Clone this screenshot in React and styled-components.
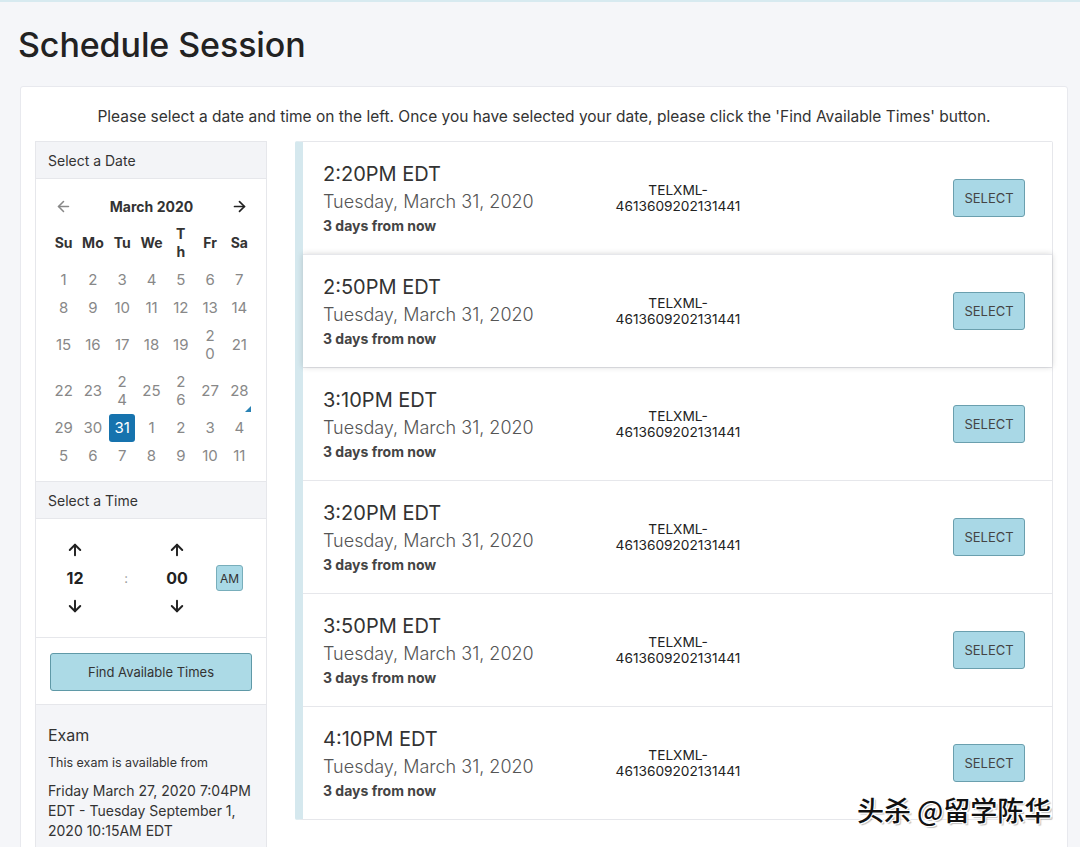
import React from "react";
import styled, { createGlobalStyle } from "styled-components";
import { ArrowLeft, ArrowRight, ArrowUp, ArrowDown } from "lucide-react";

const GlobalStyle = createGlobalStyle`
  html, body {
    margin: 0;
    padding: 0;
    background: #f5f6f9;
    font-family: Inter, "Liberation Sans", sans-serif;
    color: #333;
  }
  * { box-sizing: border-box; }
`;

const Page = styled.div`
  position: relative;
  height: 847px;
  overflow: hidden;
  border-top: 2px solid #d7eaf0;
`;

const Title = styled.h1`
  margin: 0;
  padding: 22px 0 0 18px;
  height: 84px;
  font-size: 34px;
  font-weight: 500;
  color: #222;
  letter-spacing: -0.1px;
`;

const Card = styled.div`
  margin: 0 12px 0 20px;
  background: #fff;
  border: 1px solid #e8e9ee;
  border-radius: 3px;
  padding: 0 14px;
  min-height: 800px;
`;

const Intro = styled.p`
  margin: 0;
  height: 54px;
  padding-top: 4px;
  display: flex;
  align-items: center;
  justify-content: center;
  font-size: 15.5px;
  color: #333;
`;

const Columns = styled.div`
  display: flex;
  gap: 28px;
  align-items: flex-start;
`;

const Side = styled.div`
  width: 232px;
  flex-shrink: 0;
  border: 1px solid #e6e7eb;
  border-bottom: none;
`;

const SideHeader = styled.div`
  height: 37px;
  display: flex;
  align-items: center;
  padding-left: 12px;
  background: #f3f4f7;
  border-bottom: 1px solid #e6e7eb;
  font-size: 14px;
  color: #333;
`;

const Calendar = styled.div`
  padding: 13px 12px 11px 13px;
  border-bottom: 1px solid #e6e7eb;
`;

const CalGrid = styled.div`
  display: grid;
  grid-template-columns: repeat(7, 1fr);
  text-align: center;
`;

const MonthRow = styled.div`
  grid-column: 1 / -1;
  display: grid;
  grid-template-columns: 1fr 5fr 1fr;
  align-items: center;
  height: 28px;
  font-size: 14px;
  font-weight: 700;
  color: #333;
`;

const NavArrow = styled.span`
  display: flex;
  justify-content: center;
  color: ${(p) => (p.$muted ? "#888" : "#222")};
`;

const DayHead = styled.div`
  display: flex;
  align-items: center;
  justify-content: center;
  min-height: ${(p) => (p.$tall ? "46px" : "28px")};
  font-size: 14px;
  font-weight: 700;
  line-height: 18px;
  color: #333;
`;

const DayCell = styled.div`
  display: flex;
  align-items: center;
  justify-content: center;
  position: relative;
  min-height: ${(p) => (p.$tall ? "46px" : "28px")};
  font-size: 15px;
  line-height: 18px;
  color: #888;
`;

const Selected = styled.span`
  display: flex;
  align-items: center;
  justify-content: center;
  width: 26px;
  height: 28px;
  border-radius: 3px;
  background: #1673ae;
  color: #fff;
`;

const TodayMark = styled.span`
  position: absolute;
  right: 3px;
  bottom: 2px;
  width: 0;
  height: 0;
  border-left: 6px solid transparent;
  border-bottom: 6px solid #2a82b4;
`;

const TimeBody = styled.div`
  display: flex;
  align-items: center;
  padding: 22px 0 22px 14px;
  border-bottom: 1px solid #e6e7eb;
`;

const Spinner = styled.div`
  width: 50px;
  display: flex;
  flex-direction: column;
  align-items: center;
  gap: 11px;
  color: #222;
`;

const SpinValue = styled.span`
  font-size: 16px;
  font-weight: 700;
  color: #222;
  line-height: 16px;
`;

const Colon = styled.span`
  width: 52px;
  text-align: center;
  font-size: 13px;
  color: #999;
`;

const AmButton = styled.button`
  margin-left: 14px;
  width: 27px;
  height: 26px;
  padding: 0;
  border: 1px solid #78aebb;
  border-radius: 3px;
  background: #a9d9e6;
  font-family: inherit;
  font-size: 12px;
  color: #333;
`;

const FindWrap = styled.div`
  padding: 15px 14px 13px;
  border-bottom: 1px solid #e6e7eb;
`;

const FindButton = styled.button`
  width: 100%;
  height: 38px;
  border: 1px solid #5f99a7;
  border-radius: 3px;
  background: #acdae6;
  font-family: inherit;
  font-size: 13px;
  color: #333;
`;

const Exam = styled.div`
  background: #f4f5f8;
  padding: 20px 12px 40px;
`;

const ExamTitle = styled.div`
  font-size: 16px;
  color: #333;
  line-height: 20px;
`;

const ExamNote = styled.div`
  margin-top: 10px;
  font-size: 12.5px;
  color: #333;
  line-height: 16px;
`;

const ExamRange = styled.div`
  margin-top: 10px;
  font-size: 14px;
  color: #333;
  line-height: 20px;
`;

const List = styled.div`
  flex: 1;
  border: 1px solid #e6e7eb;
  border-left: 8px solid #d5e8ee;
  border-radius: 2px;
  background: #fff;
`;

const Slot = styled.div`
  height: ${(p) => (p.$first ? "112px" : "113px")};
  display: grid;
  grid-template-columns: 1fr auto 1fr;
  align-items: center;
  padding: 0 27px 0 20px;
  border-top: ${(p) => (p.$first ? "none" : "1px solid #e6e7eb")};
  background: #fff;
  position: relative;
  z-index: ${(p) => (p.$hover ? 1 : 0)};
  box-shadow: ${(p) => (p.$hover ? "0 0 6px rgba(0, 0, 0, 0.16)" : "none")};
`;

const SlotInfo = styled.div`
  display: flex;
  flex-direction: column;
`;

const SlotTime = styled.span`
  font-size: 20px;
  line-height: 26px;
  color: #333;
`;

const SlotDate = styled.span`
  font-size: 18px;
  line-height: 30px;
  font-weight: 300;
  color: #555;
`;

const SlotAway = styled.span`
  font-size: 14px;
  line-height: 18px;
  font-weight: 700;
  color: #444;
`;

const SlotCode = styled.div`
  padding-left: 8px;
  text-align: center;
  font-size: 13.7px;
  line-height: 16px;
  color: #222;
`;

const SelectButton = styled.button`
  justify-self: end;
  width: 72px;
  height: 38px;
  border: 1px solid #6a9fae;
  border-radius: 3px;
  background: #a9d8e6;
  font-family: inherit;
  font-size: 13px;
  color: #444;
`;

const Watermark = styled.div`
  position: absolute;
  left: 857px;
  top: 794px;
  font-family: "Noto Sans CJK SC", sans-serif;
  font-size: 27px;
  line-height: 1;
  font-weight: 500;
  color: #111;
  text-shadow: 1px 1px 0 #fff, -1px -1px 0 #fff, 1px -1px 0 #fff, -1px 1px 0 #fff,
    2px 2px 1px rgba(0, 0, 0, 0.25);
`;

const weeks = [
  [["1"], ["2"], ["3"], ["4"], ["5"], ["6"], ["7"]],
  [["8"], ["9"], ["10"], ["11"], ["12"], ["13"], ["14"]],
  [["15"], ["16"], ["17"], ["18"], ["19"], ["2", "0"], ["21"]],
  [["22"], ["23"], ["2", "4"], ["25"], ["2", "6"], ["27"], ["28", "today"]],
  [["29"], ["30"], ["31", "sel"], ["1"], ["2"], ["3"], ["4"]],
  [["5"], ["6"], ["7"], ["8"], ["9"], ["10"], ["11"]],
];

const slots = ["2:20PM EDT", "2:50PM EDT", "3:10PM EDT", "3:20PM EDT", "3:50PM EDT", "4:10PM EDT"];

function Day({ cell, tall }) {
  const [a, b] = cell;
  if (b === "sel") {
    return (
      <DayCell $tall={tall}>
        <Selected>{a}</Selected>
      </DayCell>
    );
  }
  if (b === "today") {
    return (
      <DayCell $tall={tall}>
        {a}
        <TodayMark />
      </DayCell>
    );
  }
  return (
    <DayCell $tall={tall}>
      {b ? (
        <span>
          {a}
          <br />
          {b}
        </span>
      ) : (
        a
      )}
    </DayCell>
  );
}

export default function App() {
  return (
    <Page>
      <GlobalStyle />
      <Title>Schedule Session</Title>
      <Card>
        <Intro>
          Please select a date and time on the left. Once you have selected your date, please click the 'Find
          Available Times' button.
        </Intro>
        <Columns>
          <Side>
            <SideHeader>Select a Date</SideHeader>
            <Calendar>
              <CalGrid>
                <MonthRow>
                  <NavArrow $muted>
                    <ArrowLeft size={17} strokeWidth={2.2} />
                  </NavArrow>
                  <span>March 2020</span>
                  <NavArrow>
                    <ArrowRight size={17} strokeWidth={2.4} />
                  </NavArrow>
                </MonthRow>
                <DayHead $tall>Su</DayHead>
                <DayHead $tall>Mo</DayHead>
                <DayHead $tall>Tu</DayHead>
                <DayHead $tall>We</DayHead>
                <DayHead $tall>
                  T
                  <br />h
                </DayHead>
                <DayHead $tall>Fr</DayHead>
                <DayHead $tall>Sa</DayHead>
                {weeks.map((week, i) => {
                  const tall = week.some((c) => c[1] && c[1] !== "sel" && c[1] !== "today");
                  return week.map((cell, j) => <Day key={`${i}-${j}`} cell={cell} tall={tall} />);
                })}
              </CalGrid>
            </Calendar>
            <SideHeader>Select a Time</SideHeader>
            <TimeBody>
              <Spinner>
                <ArrowUp size={18} strokeWidth={2.6} />
                <SpinValue>12</SpinValue>
                <ArrowDown size={18} strokeWidth={2.6} />
              </Spinner>
              <Colon>:</Colon>
              <Spinner>
                <ArrowUp size={18} strokeWidth={2.6} />
                <SpinValue>00</SpinValue>
                <ArrowDown size={18} strokeWidth={2.6} />
              </Spinner>
              <AmButton>AM</AmButton>
            </TimeBody>
            <FindWrap>
              <FindButton>Find Available Times</FindButton>
            </FindWrap>
            <Exam>
              <ExamTitle>Exam</ExamTitle>
              <ExamNote>This exam is available from</ExamNote>
              <ExamRange>
                Friday March 27, 2020 7:04PM EDT - Tuesday September 1, 2020 10:15AM EDT
              </ExamRange>
            </Exam>
          </Side>
          <List>
            {slots.map((t, i) => (
              <Slot key={t} $first={i === 0} $hover={i === 1}>
                <SlotInfo>
                  <SlotTime>{t}</SlotTime>
                  <SlotDate>Tuesday, March 31, 2020</SlotDate>
                  <SlotAway>3 days from now</SlotAway>
                </SlotInfo>
                <SlotCode>
                  TELXML-
                  <br />
                  4613609202131441
                </SlotCode>
                <SelectButton>SELECT</SelectButton>
              </Slot>
            ))}
          </List>
        </Columns>
      </Card>
      <Watermark>头杀 @留学陈华</Watermark>
    </Page>
  );
}
